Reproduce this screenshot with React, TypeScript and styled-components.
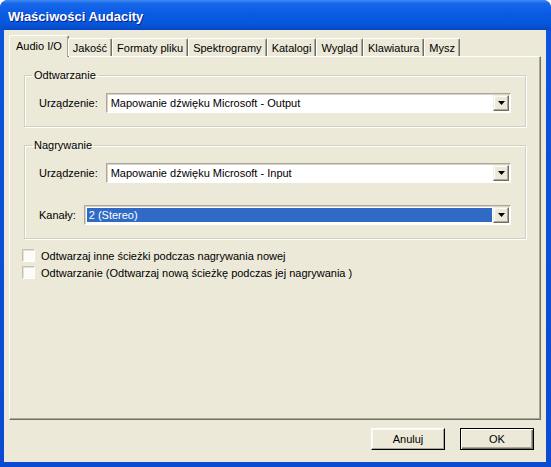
import React from "react";
import styled, { createGlobalStyle } from "styled-components";

const Global = createGlobalStyle`
  html, body { margin: 0; padding: 0; background: #ffffff; }
  body {
    width: 551px; height: 467px; overflow: hidden;
    font-family: "Liberation Sans", Arial, sans-serif;
    font-size: 11px; color: #000;
  }
  * { box-sizing: border-box; }
`;

const Window = styled.div`
  width: 551px;
  height: 467px;
  display: flex;
  flex-direction: column;
  border-radius: 8px 8px 0 0;
  overflow: hidden;
  background: #0b4ed8;
`;

const TitleBar = styled.div`
  height: 30px;
  flex: none;
  display: flex;
  align-items: center;
  padding-left: 8px;
  background: linear-gradient(180deg, #3f8cf3 0%, #1766ea 12%, #0a5ce3 45%, #0756dc 80%, #0548c4 100%);
  color: #fff;
  font-family: "Liberation Sans", Arial, sans-serif;
  font-weight: bold;
  font-size: 13px;
  text-shadow: 1px 1px 0 #0a1e8a;
  padding-top: 2px;
`;

const Frame = styled.div`
  flex: 1;
  display: flex;
  padding: 0 5px 5px 4px;
  background: linear-gradient(180deg, #0c55dc 0%, #0a4bd2 100%);
  min-height: 0;
`;

const Body = styled.div`
  flex: 1;
  display: flex;
  flex-direction: column;
  background: #ece9d8;
  padding-top: 5px;
  min-height: 0;
`;

const TabStrip = styled.div`
  display: flex;
  align-items: flex-end;
  height: 21px;
  padding-left: 7px;
  position: relative;
  z-index: 1;
`;

const Tab = styled.div<{ $active?: boolean }>`
  height: ${(p) => (p.$active ? "22px" : "18px")};
  margin: ${(p) => (p.$active ? "0 -1px -1px -2px" : "0")};
  padding: ${(p) => (p.$active ? "0 6px" : "0 4px")};
  display: flex;
  align-items: center;
  background: #ece9d8;
  border-top: 1px solid #ffffff;
  border-left: 1px solid #ffffff;
  border-right: 1px solid #716f64;
  box-shadow: inset -1px 0 0 #aca899;
  border-radius: 2px 2px 0 0;
  white-space: nowrap;
  padding-bottom: ${(p) => (p.$active ? "2px" : "0")};
`;

const Panel = styled.div`
  flex: 1;
  margin: 0 5px;
  border-top: 1px solid #ffffff;
  border-left: 1px solid #ffffff;
  border-right: 1px solid #716f64;
  border-bottom: 1px solid #716f64;
  box-shadow: inset -1px -1px 0 #aca899;
  padding: 12px 11px 0 11px;
  display: flex;
  flex-direction: column;
`;

const Group = styled.fieldset`
  margin: 0 3px;
  padding: 0 14px 13px 14px;
  border: 1px solid #d0d0bf;
  box-shadow: inset 1px 1px 0 #ffffff, 1px 1px 0 #ffffff;
  display: flex;
  flex-direction: column;
  gap: 22px;
  & + & { margin-top: 12px; }
`;

const Legend = styled.legend`
  padding: 0 2px;
  margin-left: -7px;
  line-height: 13px;
  margin-bottom: 11px;
`;

const FieldRow = styled.div`
  display: flex;
  align-items: center;
  gap: 8px;
`;

const Combo = styled.div`
  flex: 1;
  height: 20px;
  display: flex;
  align-items: stretch;
  background: #ffffff;
  border-top: 1px solid #aca899;
  border-left: 1px solid #aca899;
  border-right: 1px solid #ffffff;
  border-bottom: 1px solid #ffffff;
  box-shadow: inset 1px 1px 0 #d6d3c6;
  padding: 1px;
`;

const ComboText = styled.div<{ $selected?: boolean }>`
  flex: 1;
  display: flex;
  align-items: center;
  padding-left: 2px;
  margin: 1px;
  background: ${(p) => (p.$selected ? "#316ac5" : "transparent")};
  color: ${(p) => (p.$selected ? "#ffffff" : "#000000")};
  white-space: nowrap;
`;

const ArrowButton = styled.div`
  width: 16px;
  flex: none;
  display: flex;
  align-items: center;
  justify-content: center;
  background: #ece9d8;
  border-top: 1px solid #f1efe2;
  border-left: 1px solid #f1efe2;
  border-right: 1px solid #716f64;
  border-bottom: 1px solid #716f64;
  box-shadow: inset -1px -1px 0 #aca899, inset 1px 1px 0 #ffffff;
`;

const Arrow = () => (
  <svg width="7" height="4" viewBox="0 0 7 4">
    <path d="M0 0h7L3.5 4z" fill="#000" />
  </svg>
);

const Checks = styled.div`
  margin-top: 8px;
  display: flex;
  flex-direction: column;
`;

const CheckRow = styled.label`
  height: 17px;
  display: flex;
  align-items: center;
  gap: 6px;
  padding-left: 1px;
`;

const CheckBox = styled.span`
  width: 13px;
  height: 13px;
  flex: none;
  background: #fbfbf8;
  border-top: 1px solid #c4c1b2;
  border-left: 1px solid #c4c1b2;
  border-right: 1px solid #ffffff;
  border-bottom: 1px solid #ffffff;
  box-shadow: inset 1px 1px 0 #e4e2d6;
`;

const ButtonRow = styled.div`
  display: flex;
  justify-content: flex-end;
  gap: 15px;
  padding: 8px 12px 12px 0;
`;

const Button = styled.div<{ $default?: boolean }>`
  width: 74px;
  height: 22px;
  display: flex;
  align-items: center;
  justify-content: center;
  background: #ece9d8;
  border: 1px solid ${(p) => (p.$default ? "#000000" : "#ffffff")};
  border-right-color: #000000;
  border-bottom-color: #000000;
  box-shadow: ${(p) =>
    p.$default
      ? "inset 1px 1px 0 #ffffff, inset -1px -1px 0 #716f64, inset -2px -2px 0 #aca899"
      : "inset -1px -1px 0 #aca899, inset 1px 1px 0 #f7f6f1"};
`;

const tabs = ["Audio I/O", "Jakość", "Formaty pliku", "Spektrogramy", "Katalogi", "Wygląd", "Klawiatura", "Mysz"];

export default function App() {
  return (
    <>
      <Global />
      <Window>
        <TitleBar>Właściwości Audacity</TitleBar>
        <Frame>
          <Body>
            <TabStrip>
              {tabs.map((t, i) => (
                <Tab key={t} $active={i === 0}>
                  {t}
                </Tab>
              ))}
            </TabStrip>
            <Panel>
              <Group>
                <Legend>Odtwarzanie</Legend>
                <FieldRow>
                  <span>Urządzenie:</span>
                  <Combo>
                    <ComboText>Mapowanie dźwięku Microsoft - Output</ComboText>
                    <ArrowButton>
                      <Arrow />
                    </ArrowButton>
                  </Combo>
                </FieldRow>
              </Group>
              <Group>
                <Legend>Nagrywanie</Legend>
                <FieldRow>
                  <span>Urządzenie:</span>
                  <Combo>
                    <ComboText>Mapowanie dźwięku Microsoft - Input</ComboText>
                    <ArrowButton>
                      <Arrow />
                    </ArrowButton>
                  </Combo>
                </FieldRow>
                <FieldRow>
                  <span>Kanały:</span>
                  <Combo>
                    <ComboText $selected>2 (Stereo)</ComboText>
                    <ArrowButton>
                      <Arrow />
                    </ArrowButton>
                  </Combo>
                </FieldRow>
              </Group>
              <Checks>
                <CheckRow>
                  <CheckBox />
                  Odtwarzaj inne ścieżki podczas nagrywania nowej
                </CheckRow>
                <CheckRow>
                  <CheckBox />
                  Odtwarzanie (Odtwarzaj nową ścieżkę podczas jej nagrywania )
                </CheckRow>
              </Checks>
            </Panel>
            <ButtonRow>
              <Button>Anuluj</Button>
              <Button $default>OK</Button>
            </ButtonRow>
          </Body>
        </Frame>
      </Window>
    </>
  );
}
